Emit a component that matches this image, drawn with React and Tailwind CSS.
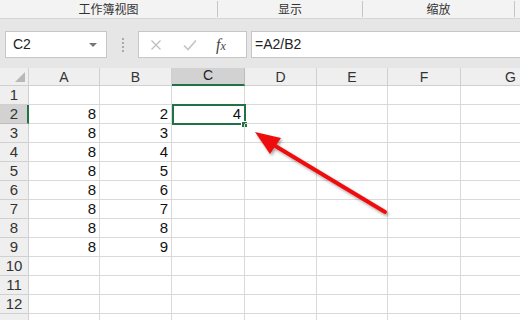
import React from 'react';

const cols = [
  { name: 'A', w: 71 },
  { name: 'B', w: 72 },
  { name: 'C', w: 73 },
  { name: 'D', w: 72 },
  { name: 'E', w: 71 },
  { name: 'F', w: 73 },
  { name: 'G', w: 100 },
];

const data = {
  2: ['8', '2', '4'],
  3: ['8', '3'],
  4: ['8', '4'],
  5: ['8', '5'],
  6: ['8', '6'],
  7: ['8', '7'],
  8: ['8', '8'],
  9: ['8', '9'],
};

const rows = [1, 2, 3, 4, 5, 6, 7, 8, 9, 10, 11, 12, 13];

export default function App() {
  return (
    <div
      className="w-[520px] h-[320px] overflow-hidden bg-[#e6e6e6] relative select-none"
      style={{ fontFamily: '"Liberation Sans", "Noto Sans CJK SC", sans-serif' }}
    >
      {/* Ribbon group labels */}
      <div className="h-[19px] bg-[#f3f3f3] border-b border-[#d5d5d5] flex text-[12px] text-[#333] leading-[15px]">
        <div className="w-[218px] border-r border-[#c6c6c6] my-px flex justify-center">
          <span style={{ fontFamily: '"Noto Sans CJK SC", sans-serif' }}>工作簿视图</span>
        </div>
        <div className="w-[145px] border-r border-[#c6c6c6] my-px flex justify-center">
          <span style={{ fontFamily: '"Noto Sans CJK SC", sans-serif' }}>显示</span>
        </div>
        <div className="w-[152px] border-r border-[#c6c6c6] my-px flex justify-center">
          <span style={{ fontFamily: '"Noto Sans CJK SC", sans-serif' }}>缩放</span>
        </div>
      </div>

      {/* Formula bar */}
      <div className="flex items-center h-[27px] mt-[12px]">
        <div className="ml-[5px] w-[102px] h-[27px] bg-white border border-[#c6c6c6] flex items-center justify-between pl-[7px] pr-[9px]">
          <span className="text-[14px] text-[#222]">C2</span>
          <span className="w-0 h-0 border-l-[4px] border-r-[4px] border-t-[4px] border-l-transparent border-r-transparent border-t-[#777]" />
        </div>
        <div className="w-[31px] flex flex-col items-center gap-[2px]">
          <span className="w-[2px] h-[2px] bg-[#aaa]" />
          <span className="w-[2px] h-[2px] bg-[#aaa]" />
          <span className="w-[2px] h-[2px] bg-[#aaa]" />
          <span className="w-[2px] h-[2px] bg-[#aaa]" />
        </div>
        <div className="w-[109px] h-[27px] bg-white border border-[#c6c6c6] flex items-center">
          <svg width="12" height="12" viewBox="0 0 12 12" className="ml-[11px]">
            <path d="M1.5 1.5 L10.5 10.5 M10.5 1.5 L1.5 10.5" stroke="#bdbdbd" strokeWidth="1.2" fill="none" />
          </svg>
          <svg width="14" height="12" viewBox="0 0 14 12" className="ml-[21px]">
            <path d="M1 6.5 L5 10.5 L13 1.5" stroke="#c4c4c4" strokeWidth="1.6" fill="none" />
          </svg>
          <span
            className="ml-[19px] text-[16px] italic text-[#444] leading-none"
            style={{ fontFamily: '"Liberation Serif", serif' }}
          >
            f<span className="text-[12px]">x</span>
          </span>
        </div>
        <div className="ml-[4px] flex-1 h-[27px] bg-white border-y border-l border-[#c6c6c6] flex items-center pl-[3px] text-[14px] text-[#222]">
          =A2/B2
        </div>
      </div>

      {/* Sheet */}
      <div className="mt-[10px] bg-white">
        {/* Column headers */}
        <div className="flex h-[18px] bg-[#efefef]">
          <div className="w-[29px] shrink-0 border-r border-b border-[#d0d0d0] relative">
            <span className="absolute right-[3px] bottom-[3px] w-0 h-0" style={{ borderBottom: '10px solid #b8b8b8', borderLeft: '10px solid transparent' }} />
          </div>
          {cols.map((c) => (
            <div
              key={c.name}
              className={
                c.name === 'C'
                  ? 'shrink-0 bg-[#d2d2d2] border-r border-[#bdbdbd] border-b-2 border-b-[#217346] flex items-center justify-center text-[14px] text-[#222] pb-[1px]'
                  : 'shrink-0 border-r border-b border-[#d0d0d0] flex items-center justify-center text-[14px] text-[#333] pt-[1px]'
              }
              style={{ width: c.w }}
            >
              {c.name}
            </div>
          ))}
        </div>

        {rows.map((r) => (
          <div key={r} className="flex h-[19px]">
            <div
              className={
                r === 2
                  ? 'w-[29px] shrink-0 bg-[#d2d2d2] border-r-2 border-r-[#217346] border-b border-b-[#bdbdbd] flex items-center justify-center text-[15px] text-[#333] pl-px'
                  : 'w-[29px] shrink-0 bg-[#efefef] border-r border-b border-[#d0d0d0] flex items-center justify-center text-[15px] text-[#333]'
              }
            >
              {r < 13 ? r : null}
            </div>
            {cols.map((c, i) => {
              const v = data[r] ? data[r][i] : undefined;
              const selected = r === 2 && c.name === 'C';
              return (
                <div
                  key={c.name}
                  className="shrink-0 border-r border-b border-[#d9d9d9] flex items-center justify-end pr-[3px] text-[15px] text-[#111] relative"
                  style={{ width: c.w }}
                >
                  {v}
                  {selected && (
                    <>
                      <span className="absolute left-0 -top-px right-[-2px] bottom-[-2px] border-2 border-[#217346]" />
                      <span className="absolute right-[-4px] bottom-[-5px] w-[7px] h-[7px] bg-[#217346] border border-white" />
                    </>
                  )}
                </div>
              );
            })}
          </div>
        ))}
      </div>

      {/* Red annotation arrow */}
      <svg
        className="absolute left-0 top-0 pointer-events-none"
        width="520"
        height="320"
        viewBox="0 0 520 320"
      >
        <defs>
          <filter id="sh" x="-20%" y="-20%" width="140%" height="140%">
            <feDropShadow dx="1.5" dy="2" stdDeviation="1.5" floodColor="#000" floodOpacity="0.35" />
          </filter>
        </defs>
        <g filter="url(#sh)">
          <line x1="385" y1="212" x2="272" y2="144" stroke="#ee1111" strokeWidth="4" strokeLinecap="round" />
          <polygon points="255,132 281,138 270,154" fill="#ee1111" />
        </g>
      </svg>
    </div>
  );
}
